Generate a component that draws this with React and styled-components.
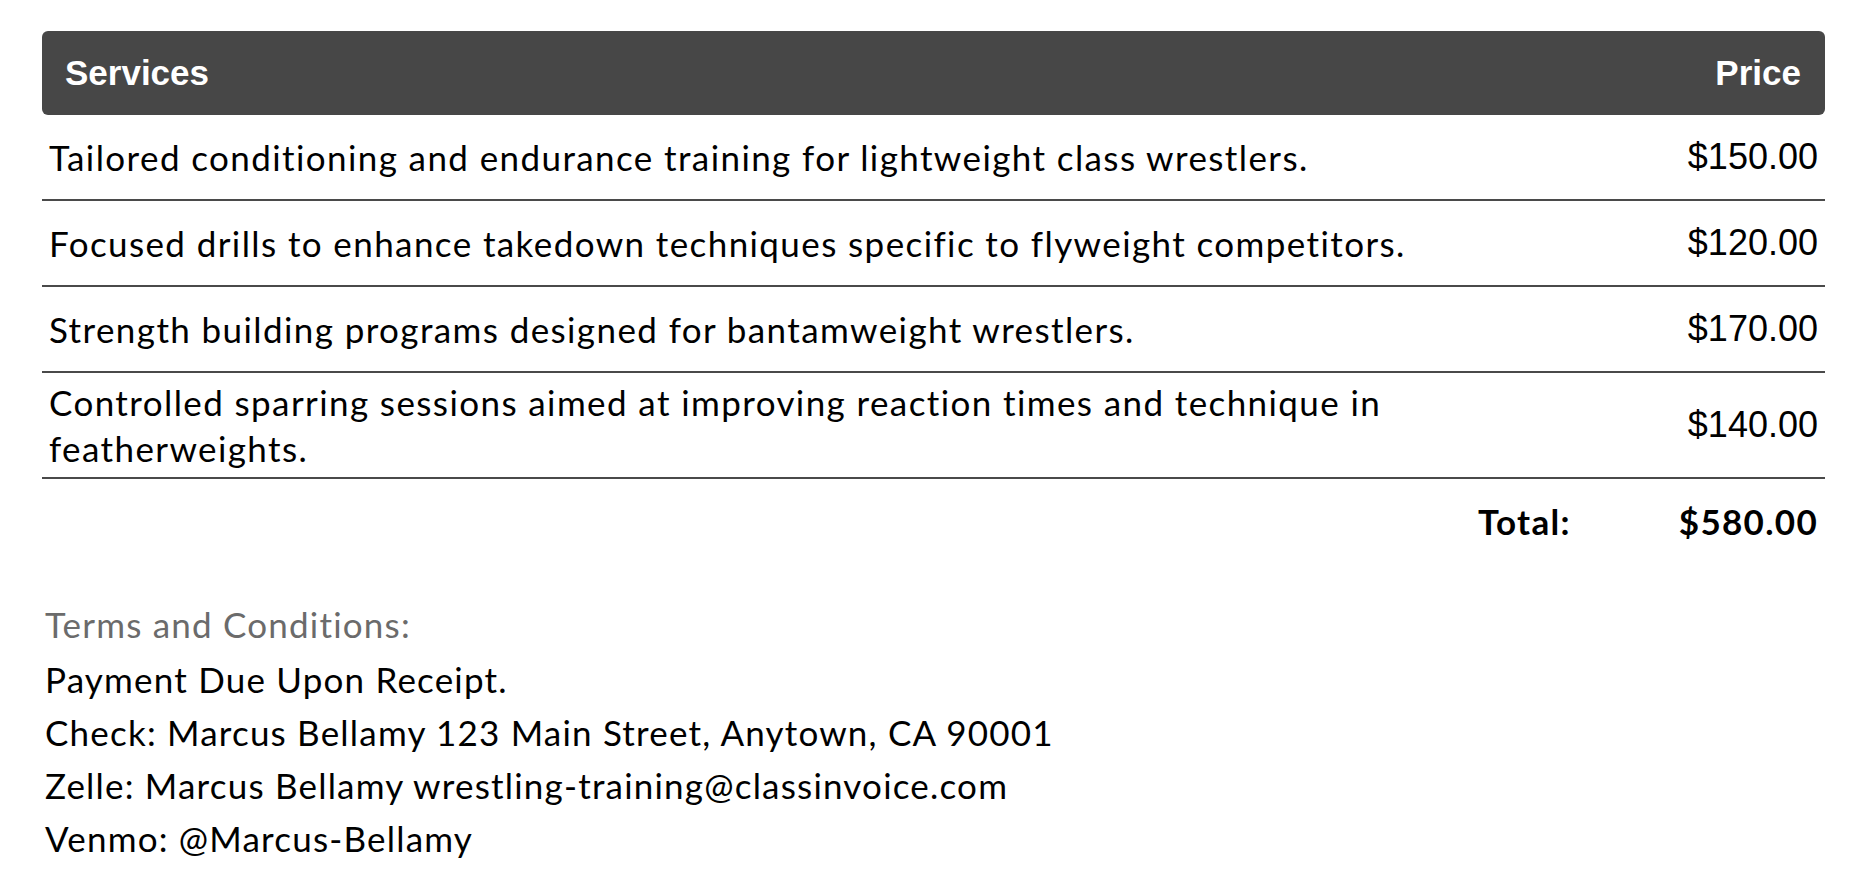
import React from "react";
import styled, { createGlobalStyle } from "styled-components";

const GlobalStyle = createGlobalStyle`
  body {
    margin: 0;
    background: #ffffff;
    font-family: Lato, "Open Sans", sans-serif;
    color: #000;
  }
`;

const Page = styled.div`
  padding: 31px 43px 0 42px;
`;

const Table = styled.div`
  width: 100%;
`;

const Head = styled.div`
  display: grid;
  grid-template-columns: 80% 20%;
  align-items: center;
  height: 84px;
  padding: 0 24px 0 23px;
  box-sizing: border-box;
  background: #474747;
  border-radius: 6px;
  color: #fff;
  font-family: "Liberation Sans", Arial, sans-serif;
  font-weight: 700;
  font-size: 35px;
`;

const HeadCell = styled.div`
  text-align: ${({ $right }) => ($right ? "right" : "left")};
`;

const Row = styled.div`
  display: grid;
  grid-template-columns: 80% 20%;
  align-items: center;
  min-height: 86px;
  padding: 6px 7px;
  box-sizing: border-box;
  border-bottom: 2px solid #4a4a4a;
`;

const Desc = styled.div`
  font-size: 35px;
  line-height: 46px;
  letter-spacing: 1.4px;
`;

const Price = styled.div`
  text-align: right;
  font-family: "Liberation Sans", Arial, sans-serif;
  font-size: 36px;
`;

const TotalRow = styled.div`
  display: flex;
  justify-content: flex-end;
  align-items: center;
  gap: 108px;
  height: 84px;
  padding-right: 7px;
  font-size: 35px;
  font-weight: 700;
  letter-spacing: 1.3px;
`;

const Terms = styled.div`
  margin-top: 34px;
  padding-left: 3px;
  font-size: 35px;
  letter-spacing: 1.2px;
`;

const TermsTitle = styled.div`
  color: #6b6b6b;
  line-height: 54px;
  margin-bottom: 2px;
`;

const TermsLine = styled.div`
  line-height: 53px;
`;

const services = [
  { desc: "Tailored conditioning and endurance training for lightweight class wrestlers.", price: "$150.00" },
  { desc: "Focused drills to enhance takedown techniques specific to flyweight competitors.", price: "$120.00" },
  { desc: "Strength building programs designed for bantamweight wrestlers.", price: "$170.00" },
  { desc: "Controlled sparring sessions aimed at improving reaction times and technique in featherweights.", price: "$140.00" },
];

export default function App() {
  return (
    <>
      <GlobalStyle />
      <Page>
        <Table>
          <Head>
            <HeadCell>Services</HeadCell>
            <HeadCell $right>Price</HeadCell>
          </Head>
          {services.map((s) => (
            <Row key={s.price}>
              <Desc>{s.desc}</Desc>
              <Price>{s.price}</Price>
            </Row>
          ))}
          <TotalRow>
            <span>Total:</span>
            <span>$580.00</span>
          </TotalRow>
        </Table>
        <Terms>
          <TermsTitle>Terms and Conditions:</TermsTitle>
          <TermsLine>Payment Due Upon Receipt.</TermsLine>
          <TermsLine>Check: Marcus Bellamy 123 Main Street, Anytown, CA 90001</TermsLine>
          <TermsLine>Zelle: Marcus Bellamy wrestling-training@classinvoice.com</TermsLine>
          <TermsLine>Venmo: @Marcus-Bellamy</TermsLine>
        </Terms>
      </Page>
    </>
  );
}
